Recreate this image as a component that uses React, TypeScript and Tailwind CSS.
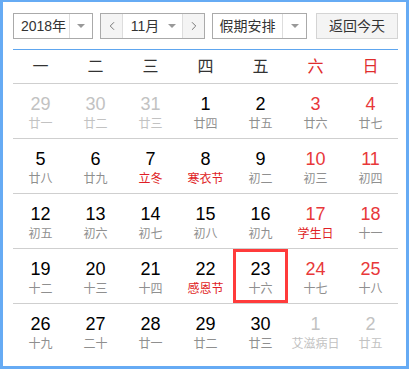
import {ChevronLeft, ChevronRight} from "lucide-react";

type Day = {
    n: number;
    lunar: string;
    other?: boolean;
    red?: boolean;
    fest?: boolean;
    today?: boolean;
};

const weeks: Day[][] = [
    [
        {n: 29, lunar: "廿一", other: true},
        {n: 30, lunar: "廿二", other: true},
        {n: 31, lunar: "廿三", other: true},
        {n: 1, lunar: "廿四"},
        {n: 2, lunar: "廿五"},
        {n: 3, lunar: "廿六", red: true},
        {n: 4, lunar: "廿七", red: true},
    ],
    [
        {n: 5, lunar: "廿八"},
        {n: 6, lunar: "廿九"},
        {n: 7, lunar: "立冬", fest: true},
        {n: 8, lunar: "寒衣节", fest: true},
        {n: 9, lunar: "初二"},
        {n: 10, lunar: "初三", red: true},
        {n: 11, lunar: "初四", red: true},
    ],
    [
        {n: 12, lunar: "初五"},
        {n: 13, lunar: "初六"},
        {n: 14, lunar: "初七"},
        {n: 15, lunar: "初八"},
        {n: 16, lunar: "初九"},
        {n: 17, lunar: "学生日", red: true, fest: true},
        {n: 18, lunar: "十一", red: true},
    ],
    [
        {n: 19, lunar: "十二"},
        {n: 20, lunar: "十三"},
        {n: 21, lunar: "十四"},
        {n: 22, lunar: "感恩节", fest: true},
        {n: 23, lunar: "十六", today: true},
        {n: 24, lunar: "十七", red: true},
        {n: 25, lunar: "十八", red: true},
    ],
    [
        {n: 26, lunar: "十九"},
        {n: 27, lunar: "二十"},
        {n: 28, lunar: "廿一"},
        {n: 29, lunar: "廿二"},
        {n: 30, lunar: "廿三"},
        {n: 1, lunar: "艾滋病日", other: true},
        {n: 2, lunar: "廿五", other: true},
    ],
];

const weekdays = ["一", "二", "三", "四", "五", "六", "日"];

function Caret() {
    return <span className="block w-0 h-0 border-x-[4px] border-t-[4px] border-x-transparent border-t-[#999]"></span>;
}

function Cell({d}: {d: Day}) {
    let numColor = "text-black";
    if (d.red) numColor = "text-[#e8383a]";
    if (d.other) numColor = "text-[#c2c2c2]";

    let lunarColor = "text-[#8f8f8f]";
    if (d.fest) lunarColor = "text-[#e01e26]";
    if (d.other) lunarColor = "text-[#c2c2c2]";

    return (
        <div className={"flex flex-col items-center " + (d.today ? "border-[3px] border-[#ff3b3b] pt-[7px]" : "pt-[10px]")}>
            <span className={"text-[18px] leading-[20px] font-['Liberation_Sans',sans-serif] " + numColor}>{d.n}</span>
            <span className={"mt-[2px] text-[12px] leading-[16px] whitespace-nowrap " + lunarColor}>{d.lunar}</span>
        </div>
    );
}

export default function App() {
    return (
        <div className="w-[409px] h-[369px] border-[3px] border-t-2 border-[#66abf4] bg-white pl-[10px] pr-[8px] pt-[11px] font-['Liberation_Sans','Noto_Sans_CJK_SC',sans-serif]">

            <div className="flex h-[26px] text-[14px] text-[#333]">
                <div className="w-[80px] flex border border-[#aaa]">
                    <div className="flex-1 flex items-center justify-center pl-[4px]">2018年</div>
                    <div className="w-[23px] border-l border-[#ddd] flex items-center justify-center"><Caret /></div>
                </div>

                <div className="ml-[7px] w-[105px] flex border border-[#aaa]">
                    <div className="w-[22px] bg-[#f4f4f4] border-r border-[#ddd] flex items-center justify-center">
                        <ChevronLeft size={14} strokeWidth={1.5} className="text-[#666]" />
                    </div>
                    <div className="flex-1 flex items-center justify-center gap-[9px] pl-[2px]">
                        <span>11月</span>
                        <Caret />
                    </div>
                    <div className="w-[22px] bg-[#f4f4f4] border-l border-[#ddd] flex items-center justify-center">
                        <ChevronRight size={14} strokeWidth={1.5} className="text-[#666]" />
                    </div>
                </div>

                <div className="ml-[7px] w-[95px] flex border border-[#aaa]">
                    <div className="flex-1 flex items-center justify-center">假期安排</div>
                    <div className="w-[24px] border-l border-[#ddd] flex items-center justify-center"><Caret /></div>
                </div>

                <div className="ml-[9px] w-[82px] flex items-center justify-center bg-[#f4f4f4] border border-[#d4d4d4]">
                    返回今天
                </div>
            </div>

            <div className="mt-[10px] h-px bg-[#5ea6ef]"></div>

            <div className="grid grid-cols-7 h-[33px] items-center text-[16px]">
                {weekdays.map((w, i) => (
                    <div key={w} className={"text-center " + (i >= 5 ? "text-[#e02d2d]" : "text-[#333]")}>{w}</div>
                ))}
            </div>

            {weeks.map((week, i) => (
                <div key={i} className="grid grid-cols-7 h-[55px] border-t border-[#cfcfcf]">
                    {week.map((d, j) => <Cell key={j} d={d} />)}
                </div>
            ))}
        </div>
    );
}
